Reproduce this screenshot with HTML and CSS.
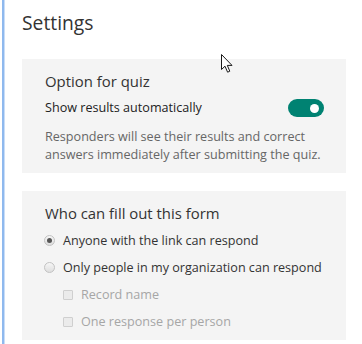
FILE: index.html
```html
<!DOCTYPE html>
<html lang="en">
<head>
<meta charset="utf-8">
<title>Settings</title>
<link rel="stylesheet" href="styles.css">
</head>
<body>
<div class="page">
  <div class="edge"></div>
  <main class="panel">
    <h1 class="title">Settings</h1>

    <section class="card card-quiz">
      <h2 class="card-heading">Option for quiz</h2>
      <div class="toggle-row">
        <span class="toggle-label">Show results automatically</span>
        <span class="toggle" role="switch" aria-checked="true"><span class="knob"></span></span>
      </div>
      <p class="desc">Responders will see their results and correct answers immediately after submitting the quiz.</p>
    </section>

    <section class="card card-who">
      <h2 class="card-heading">Who can fill out this form</h2>
      <div class="opt">
        <span class="radio checked"></span>
        <span class="opt-label">Anyone with the link can respond</span>
      </div>
      <div class="opt">
        <span class="radio"></span>
        <span class="opt-label">Only people in my organization can respond</span>
      </div>
      <div class="opt sub">
        <span class="check"></span>
        <span class="opt-label disabled">Record name</span>
      </div>
      <div class="opt sub">
        <span class="check"></span>
        <span class="opt-label disabled">One response per person</span>
      </div>
    </section>
  </main>
  <svg class="cursor" width="13" height="20" viewBox="0 0 13 20" aria-hidden="true">
    <path d="M0.5 0.5 L0.5 15.5 L4 12.2 L6.6 18.2 L8.8 17.2 L6.3 11.4 L11 11.4 Z" fill="#fff" stroke="#1a1a1a" stroke-width="1" stroke-linejoin="miter"/>
  </svg>
</div>
</body>
</html>
```
FILE: styles.css
```css
html, body {
  margin: 0;
  padding: 0;
  background: #ffffff;
}

body {
  font-family: "Open Sans", "Noto Sans", "DejaVu Sans", sans-serif;
  color: #333333;
}

.page {
  position: relative;
  display: flex;
  width: 362px;
  height: 344px;
  overflow: hidden;
}

.edge {
  flex: 0 0 auto;
  width: 2px;
  margin-left: 2px;
  background: #8fb9ee;
  border-right: 1px solid #c9ddf7;
}

.panel {
  flex: 1 1 auto;
  display: flex;
  flex-direction: column;
  padding: 0 16px 0 17px;
}

.title {
  margin: 0;
  padding-top: 9px;
  font-size: 19.3px;
  line-height: 28px;
  font-weight: 400;
  color: #333333;
}

.card {
  background: #f4f4f4;
  padding: 0 22px 0 23px;
}

.card-quiz {
  margin-top: 22px;
  padding-top: 11px;
  padding-bottom: 9px;
}

.card-who {
  margin-top: 18px;
  padding-top: 10px;
  padding-bottom: 5px;
}

.card-heading {
  margin: 0;
  font-size: 14.9px;
  line-height: 22px;
  font-weight: 400;
  color: #333333;
}

.card-who .card-heading {
  line-height: 24px;
}

.toggle-row {
  display: flex;
  align-items: center;
  justify-content: space-between;
  margin-top: 6px;
  height: 20px;
}

.toggle-label {
  font-size: 12.6px;
  line-height: 20px;
  color: #222222;
  white-space: nowrap;
}

.toggle {
  position: relative;
  display: block;
  width: 36px;
  height: 18px;
  border-radius: 9px;
  background: #008272;
}

.knob {
  position: absolute;
  right: 5px;
  top: 4.5px;
  width: 9px;
  height: 9px;
  border-radius: 50%;
  background: #ffffff;
}

.desc {
  margin: 10px 0 0;
  font-size: 12.6px;
  line-height: 18px;
  color: #666666;
}

.opt {
  display: flex;
  align-items: center;
  height: 27px;
}

.card-who .card-heading + .opt {
  margin-top: 2px;
}

.opt.sub {
  padding-left: 18px;
}

.opt-label {
  font-size: 12.6px;
  line-height: 20px;
  color: #333333;
  white-space: nowrap;
}

.opt-label.disabled {
  color: #a6a6a6;
}

.radio {
  position: relative;
  flex: 0 0 auto;
  box-sizing: border-box;
  width: 11px;
  height: 11px;
  margin-left: -1px;
  margin-right: 8px;
  border-radius: 50%;
  border: 1px solid #c2c2c2;
  background: linear-gradient(#f6f6f6, #dedede);
}

.radio.checked::after {
  content: "";
  position: absolute;
  left: 2px;
  top: 2px;
  width: 5px;
  height: 5px;
  border-radius: 50%;
  background: #555555;
}

.check {
  flex: 0 0 auto;
  box-sizing: border-box;
  width: 10px;
  height: 10px;
  margin-right: 8px;
  border: 1px solid #cfcfcf;
  border-radius: 1px;
  background: #ebebeb;
}

.cursor {
  position: absolute;
  left: 221px;
  top: 54px;
}
```
